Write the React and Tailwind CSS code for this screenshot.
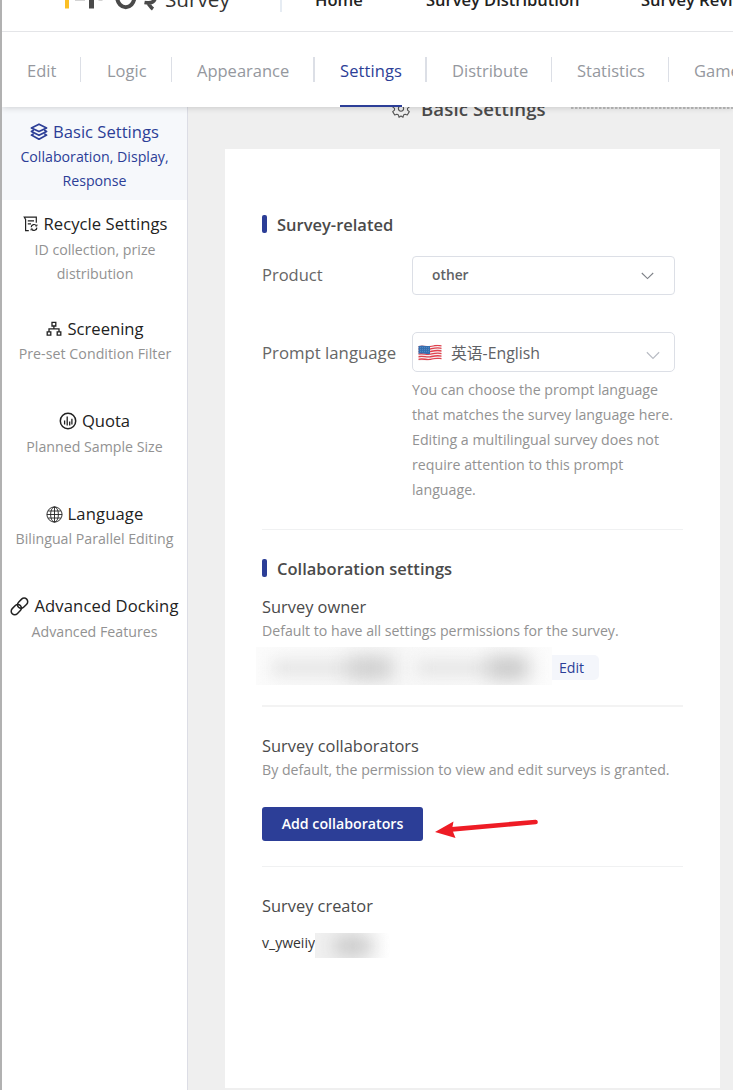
const tabs = [
  { label: "Edit", box: "pl-[25px] w-[78px]", sep: "w-px" },
  { label: "Logic", box: "pl-[27px] w-[91px]", sep: "w-px" },
  { label: "Appearance", box: "pl-[26px] w-[143px]", sep: "w-0.5" },
  { label: "Settings", box: "pl-[26px] w-[112px]", sep: "w-0.5", active: true },
  { label: "Distribute", box: "pl-[26px] w-[125px]", sep: "w-px" },
  { label: "Statistics", box: "pl-[26px] w-[117px]", sep: "w-px" },
  { label: "Gamers", box: "pl-[26px] w-[110px]", sep: "w-px" },
];

function LayersIcon() {
  return (
    <svg className="h-[18px] w-[18px]" viewBox="0 0 18 18" fill="none" stroke="currentColor" strokeWidth="1.7" strokeLinejoin="round">
      <path d="M9 1.2 16.6 4.9 9 8.6 1.4 4.9Z" />
      <path d="M3.8 7 1.4 8.4 9 12.3l7.6-3.9L14.2 7" />
      <path d="m3.8 10.6-2.4 1.5L9 16.2l7.6-4.1-2.4-1.5" />
    </svg>
  );
}

function RecycleIcon() {
  return (
    <svg className="h-4 w-4" viewBox="0 0 16 16" fill="none" stroke="currentColor" strokeWidth="1.2">
      <path d="M5.8 14.600H2.600V3.400L1.300 1.200h12v5.600M4.800 4.800h6.200M4.800 7.800h3.200" />
      <path d="M8.200 11.200a2.900 2.900 0 0 1 5.300-1.400M13.900 11.600a2.900 2.900 0 0 1-5.300 1.500" />
      <path d="M14 8.400v1.700h-1.600M8 14.500v-1.700h1.600" strokeWidth=".8" />
    </svg>
  );
}

function ScreeningIcon() {
  return (
    <svg className="h-4 w-4" viewBox="0 0 16 16" fill="none" stroke="currentColor" strokeWidth="1.3">
      <path d="M6 1.4h3.800v3.600H6zM1.200 10.800h3.600v3.400H1.200zM11.200 10.800h3.600v3.400h-3.600zM7.900 5v2.800M3 10.800V7.800h10v3" />
    </svg>
  );
}

function QuotaIcon() {
  return (
    <svg className="h-[18px] w-[18px]" viewBox="0 0 18 18" fill="none" stroke="currentColor" strokeWidth="1.5">
      <circle cx="9" cy="9" r="7.7" />
      <path d="M5.6 8.6v4M8.2 4.6v8.8M10.7 9.4v4M12.9 6.8v5.8" strokeWidth="1.3" />
    </svg>
  );
}

function GlobeIcon() {
  return (
    <svg className="h-[17px] w-[17px]" viewBox="0 0 17 17" fill="none" stroke="currentColor" strokeWidth="0.9">
      <circle cx="8.5" cy="8.5" r="7.6" />
      <ellipse cx="8.5" cy="8.5" rx="3.9" ry="7.6" />
      <path d="M8.5.9v15.2M.9 8.5h15.2M2 5h13M2 12h13" />
    </svg>
  );
}

function LinkIcon() {
  return (
    <svg className="h-[19px] w-[19px]" viewBox="0 0 19 19" fill="none" stroke="currentColor" strokeWidth="1.3">
      <rect x="-5" y="-3.1" width="10" height="6.2" rx="3.1" transform="translate(12.6 6.2) rotate(-45) scale(1.15)" />
      <rect x="-5" y="-3.1" width="10" height="6.2" rx="3.1" transform="translate(6.3 12.6) rotate(-45) scale(1.15)" />
    </svg>
  );
}

const menu = [
  { title: "Basic Settings", icon: LayersIcon, desc: ["Collaboration, Display,", "Response"], box: "h-[93px] pt-[13px] bg-[#f6f8fb] text-[#2c3e97]", note: "text-[#2c3e97] pt-px", track: "" },
  { title: "Recycle Settings", icon: RecycleIcon, desc: ["ID collection, prize", "distribution"], box: "h-[105px] pt-3 pl-px text-[#222]", note: "text-[#929292] pt-0.5", track: "tracking-[0.05px]" },
  { title: "Screening", icon: ScreeningIcon, desc: ["Pre-set Condition Filter"], box: "h-[92px] pt-3 pl-px text-[#222]", note: "text-[#929292] pt-px tracking-[0.04px]", track: "" },
  { title: "Quota", icon: QuotaIcon, desc: ["Planned Sample Size"], box: "h-[93px] pt-3 text-[#222]", note: "text-[#929292] pt-0.5", track: "" },
  { title: "Language", icon: GlobeIcon, desc: ["Bilingual Parallel Editing"], box: "h-[92px] pt-3 text-[#222]", note: "text-[#929292] pt-px", track: "tracking-[0.15px]" },
  { title: "Advanced Docking", icon: LinkIcon, desc: ["Advanced Features"], box: "h-[93px] pt-3 text-[#222]", note: "text-[#929292] pt-0.5", track: "tracking-[0.12px]" },
];

function GearIcon() {
  return (
    <svg className="h-[18px] w-[18px]" viewBox="0 0 18 18" fill="none" stroke="#555" strokeWidth="1.1" strokeLinejoin="round">
      <path d="M7 1.2h4l.5 2.2 1.6.9 2.2-.8 2 3.4-1.8 1.5v1.700l1.800 1.500-2 3.400-2.200-.8-1.600.9-.5 2.200-2-1.300-2 1.300-.5-2.200-1.600-.9-2.200.8-2-3.400 1.800-1.500V8.400L.7 6.900l2-3.400 2.200.8 1.600-.9Z" />
      <circle cx="9" cy="8.600" r="2.600" />
    </svg>
  );
}

function Chevron({ className }) {
  return (
    <svg className={className} viewBox="0 0 13 8" fill="none" stroke="currentColor" strokeWidth="1.1">
      <path d="m.8 1 5.7 5.6L12.2 1" />
    </svg>
  );
}

function Flag() {
  return (
    <svg className="mt-px h-[18px] w-6" viewBox="0 0 24 18">
      <defs>
        <clipPath id="cloth">
          <path d="M.5 2C5 .4 8 2.6 12 1.8S19 0 23.5 1.2V15.4C19 14.2 16 15.4 12 16.2S5 16 .5 17.2Z" />
        </clipPath>
      </defs>
      <g clipPath="url(#cloth)">
        <path d="M0 0h24v18H0z" fill="#f6eff0" />
        <g fill="none" stroke="#e0404c" strokeWidth="1.35">
          <path d="M0 2.4C5 1 8 3.2 12 2.4S19 .6 24 1.8" />
          <path d="M0 5C5 3.6 8 5.8 12 5S19 3.2 24 4.4" />
          <path d="M0 7.6C5 6.2 8 8.4 12 7.6S19 5.8 24 7" />
          <path d="M0 10.2C5 8.8 8 11 12 10.2S19 8.4 24 9.6" />
          <path d="M0 12.8C5 11.4 8 13.6 12 12.8S19 11 24 12.2" />
          <path d="M0 15.4C5 14 8 16.2 12 15.4S19 13.6 24 14.8" />
        </g>
        <path d="M0 1.5C5 .4 8 2.6 12 1.8V10C8 10.6 5 8.8 0 10Z" fill="#356fb0" />
        <path d="M2 3.6h9M2 5.6h9M2 7.6h9" stroke="#8fb6dc" strokeWidth=".5" strokeDasharray=".8 1.2" />
      </g>
    </svg>
  );
}

function SectionTitle({ children, className = "" }) {
  return (
    <h2 className={"flex h-6 items-center gap-2.5 text-[16.5px] font-semibold text-[#4a4a4a] " + className}>
      <span className="mb-[3px] h-[18px] w-[5px] rounded-[2px] bg-[#2c3e97]" />
      {children}
    </h2>
  );
}

export default function App() {
  return (
    <div className="flex h-[1090px] w-[733px] flex-col overflow-hidden border-l-2 border-[#b1b1b1] bg-white font-['Open_Sans','Noto_Sans_CJK_SC',sans-serif]">
      <div className="relative z-10 shrink-0 bg-white shadow-[0_1px_6px_rgba(0,0,0,0.16)]">
        <header className="flex h-8 items-start overflow-hidden border-b border-[#e4e5e8]">
          <svg className="ml-[62px] h-3 w-[93px] shrink-0" viewBox="0 0 93 12">
            <path d="M1 0h4v8.5H1z" fill="#fbbf24" />
            <path d="M11 0h10v1H11z" fill="#d4d4d4" />
            <path d="M25 0h5v8.5h-5z" fill="#4a4a4a" />
            <path d="M34 0h5l-1 1h-3z" fill="#d4d4d4" />
            <path d="M53 -3c1 13.500 16.500 13.500 17.500 0" fill="none" stroke="#4a4a4a" strokeWidth="4" />
            <path d="M91 -1c-1 3-5 4.500-10.500 3.500M82.500 2.500c2.500.5 3 4 6.500 6.500" fill="none" stroke="#4a4a4a" strokeWidth="3.600" />
          </svg>
          <span className="-mt-[15px] ml-2 w-[115px] shrink-0 text-[20.7px] leading-7 text-[#333]">Survey</span>
          <span className="h-3 w-0.5 shrink-0 bg-[#e6ecf3]" />
          <nav className="-mt-3 flex shrink-0 text-[16.5px] leading-6 font-semibold whitespace-nowrap text-[#222]">
            <span className="ml-[33px] w-[111px]">Home</span>
            <span className="w-[215px]">Survey Distribution</span>
            <span>Survey Review</span>
          </nav>
        </header>
        <nav className="flex h-[75px] overflow-hidden text-[16.5px] whitespace-nowrap text-[#95989e]">
          {tabs.map((t) => (
            <div key={t.label} className={"flex shrink-0 justify-between " + t.box}>
              <span className={t.active ? "h-[75px] border-b-2 border-[#2c3e97] pt-[27px] leading-6 tracking-[0.1px] text-[#2c3e97]" : "pt-[27px] leading-6"}>{t.label}</span>
              <span className={"mt-[25px] h-[25px] translate-x-px bg-[#dcdfe6] " + t.sep} />
            </div>
          ))}
        </nav>
      </div>

      <div className="flex min-h-0 flex-1">
        <aside className="w-[186px] shrink-0 border-r border-[#dcdde5] bg-white">
          {menu.map((m) => (
            <div key={m.title} className={"text-center " + m.box}>
              <div className="flex h-6 items-center justify-center gap-[5px] text-[16.6px] whitespace-nowrap">
                <m.icon />
                <span className={m.track}>{m.title}</span>
              </div>
              <p className={"text-[14.2px] leading-6 " + m.note}>
                {m.desc.map((d) => (
                  <span key={d} className="block">{d}</span>
                ))}
              </p>
            </div>
          ))}
        </aside>

        <main className="min-w-0 flex-1 bg-[#efefef] pl-[37px]">
          <div className="-mt-[9px] flex h-[51px] items-start pl-[167px]">
            <div className="-mt-px flex h-6 items-center gap-[11px]">
              <GearIcon />
              <h1 className="text-[18.6px] leading-6 font-semibold tracking-[0.1px] whitespace-nowrap text-[#4a4a4a]">Basic Settings</h1>
            </div>
            <svg className="mt-[9px] ml-[25px] h-0.5 w-[165px] shrink-0">
              <path d="M0 1h165" stroke="#bdbdbd" strokeWidth="2" strokeDasharray="2.500 1.500" />
            </svg>
          </div>

          <div className="h-[939px] w-[495px] bg-white px-[37px] pt-16">
            <SectionTitle>Survey-related</SectionTitle>
            <div className="mt-[19px] flex h-[39px]">
              <label className="w-[150px] text-[16.5px] leading-[38px] text-[#666]">Product</label>
              <div className="flex w-[263px] items-center justify-between rounded-[4px] border border-[#dcdfe6] pr-5 pl-[19px]">
                <span className="text-[13.8px] font-semibold text-[#606266]">other</span>
                <Chevron className="h-2 w-[13px] text-[#7d8087]" />
              </div>
            </div>
            <div className="mt-[37px] flex">
              <label className="w-[150px] shrink-0 text-[16.75px] leading-[41px] text-[#666]">Prompt language</label>
              <div className="w-[271px]">
                <div className="flex h-10 w-[263px] items-center rounded-[5px] border border-[#dcdfe6] pr-3.5 pl-[5px]">
                  <Flag />
                  <span className="ml-[9px] flex-1 pt-1 text-[15.8px] text-[#606266]">英语-English</span>
                  <Chevron className="mt-1.5 h-[9px] w-3.5 text-[#b9bcc4]" />
                </div>
                <p className="mt-[5px] text-[14.2px] leading-[25px] whitespace-nowrap text-[#929292]">
                  You can choose the prompt language<br />
                  that matches the survey language here.<br />
                  Editing a multilingual survey does not<br />
                  require attention to this prompt<br />
                  language.
                </p>
              </div>
            </div>

            <hr className="mt-[27px] w-[421px] border-[#f0f1f2]" />
            <SectionTitle className="mt-[27px]">Collaboration settings</SectionTitle>
            <h3 className="mt-3.5 text-[16.4px] leading-6 text-[#4a4a4a]">Survey owner</h3>
            <p className="text-[14.15px] leading-6 whitespace-nowrap text-[#929292]">Default to have all settings permissions for the survey.</p>
            <div className="mt-1 -ml-1.5 flex h-[37px] items-center">
              <div className="flex h-[38px] w-[296px] items-center overflow-hidden bg-linear-to-r from-[#fbfbfb] via-[#f8f8f8] to-[#fcfcfc]">
                <span className="mt-1 ml-4 h-3.5 w-[85px] shrink-0 bg-[#e2e2e2] blur-[8px]" />
                <span className="mt-1 -ml-2 h-5 w-11 shrink-0 bg-[#c6c6c6] blur-[10px]" />
                <span className="mt-1 ml-6 h-3.5 w-[75px] shrink-0 bg-[#e2e2e2] blur-[8px]" />
                <span className="mt-1 -ml-1 h-5 w-10 shrink-0 bg-[#bebebe] blur-[10px]" />
              </div>
              <button className="mt-1 h-[25px] w-[47px] rounded-r-[5px] bg-[#f4f6fb] pr-2 text-[14.2px] leading-[25px] text-[#2c3e97]">Edit</button>
            </div>

            <hr className="mt-[21px] w-[421px] border-t-2 border-[#f3f3f3]" />
            <h3 className="mt-[27px] text-[16.43px] leading-6 text-[#4a4a4a]">Survey collaborators</h3>
            <p className="text-[14.17px] leading-6 whitespace-nowrap text-[#929292]">By default, the permission to view and edit surveys is granted.</p>
            <div className="mt-[25px] flex h-[34px]">
              <button className="w-[161px] rounded-[3px] bg-[#2c3e97] text-[14.2px] font-semibold whitespace-nowrap text-white">Add collaborators</button>
              <svg className="mt-2.5 ml-3 h-6 w-[105px]" viewBox="0 0 105 24">
                <path d="M14 12.6 100.5 5" stroke="#ee1c25" strokeWidth="4.6" strokeLinecap="round" />
                <path d="M0 15 18.5 4.5 17 12.3 20.5 21Z" fill="#ee1c25" />
              </svg>
            </div>

            <hr className="mt-[25px] w-[421px] border-[#f0f1f2]" />
            <h3 className="mt-[27px] text-[16.4px] leading-6 text-[#4a4a4a]">Survey creator</h3>
            <div className="mt-[15px] flex h-[25px] items-center">
              <span className="mb-[5px] w-[53px] text-[14px] leading-5 text-[#333]">v_yweiiy</span>
              <div className="flex h-[25px] w-[75px] items-center overflow-hidden bg-linear-to-r from-[#f0f0f0] from-50% to-white">
                <span className="ml-5 h-4 w-9 bg-[#c2c2c2] blur-[9px]" />
              </div>
            </div>
          </div>
        </main>
      </div>
    </div>
  );
}
